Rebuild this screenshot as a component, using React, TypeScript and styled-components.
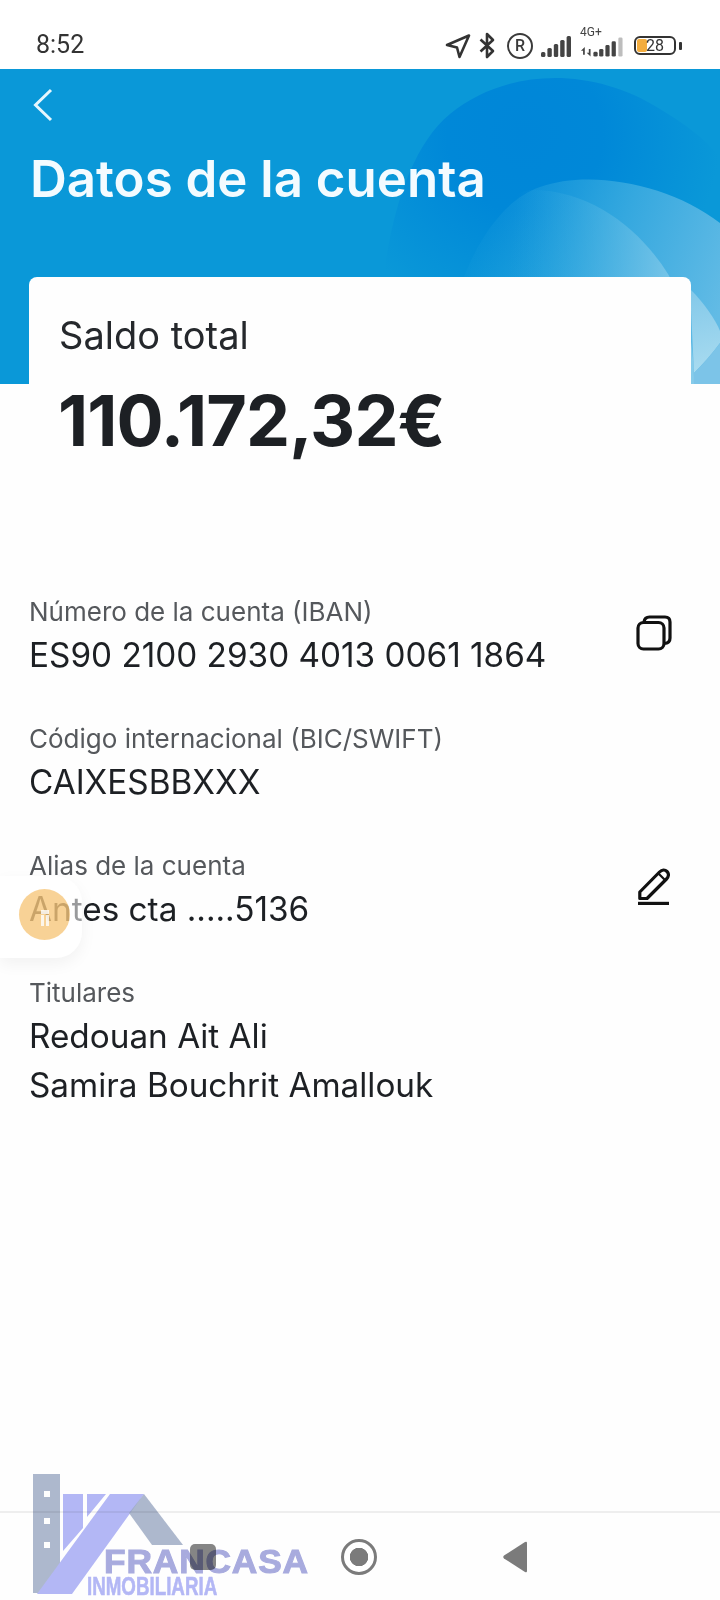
import React from "react";
import styled, { createGlobalStyle } from "styled-components";

const GlobalStyle = createGlobalStyle`
  html, body {
    margin: 0;
    padding: 0;
    background: #fefefe;
  }
  * {
    box-sizing: border-box;
  }
`;

const accounts = [
  { label: "Número de la cuenta (IBAN)", values: ["ES90 2100 2930 4013 0061 1864"], action: "copy" },
  { label: "Código internacional (BIC/SWIFT)", values: ["CAIXESBBXXX"] },
  { label: "Alias de la cuenta", values: ["Antes cta .....5136"], action: "edit" },
  { label: "Titulares", values: ["Redouan Ait Ali", "Samira Bouchrit Amallouk"] },
];

function SignalBars({ bars }: { bars: number[] }) {
  return (
    <svg width={bars.length * 6.4} height="22" viewBox={`0 0 ${bars.length * 6.4} 22`}>
      {bars.map((h, i) => (
        <rect key={i} x={i * 6.4} y={22 - h} width="4.4" height={h} rx="1.5" fill="#444" />
      ))}
    </svg>
  );
}

function HeaderShapes() {
  return (
    <HeaderArt viewBox="0 0 720 315" preserveAspectRatio="none">
      <defs>
        <radialGradient id="arcA" gradientUnits="userSpaceOnUse" cx="525" cy="65" r="195">
          <stop offset="0" stopColor="#0086d8" />
          <stop offset="0.4" stopColor="#0088d8" />
          <stop offset="1" stopColor="#0a98d8" />
        </radialGradient>
        <linearGradient id="arcB" gradientUnits="userSpaceOnUse" x1="470" y1="150" x2="720" y2="240">
          <stop offset="0" stopColor="#2aa6de" stopOpacity="0" />
          <stop offset="0.55" stopColor="#35a8df" />
          <stop offset="1" stopColor="#62bbe5" />
        </linearGradient>
        <linearGradient id="arcC" gradientUnits="userSpaceOnUse" x1="510" y1="200" x2="690" y2="215">
          <stop offset="0" stopColor="#2aa6de" stopOpacity="0" />
          <stop offset="1" stopColor="#86cbea" />
        </linearGradient>
        <linearGradient id="arcD" gradientUnits="userSpaceOnUse" x1="695" y1="210" x2="715" y2="300">
          <stop offset="0" stopColor="#7ec6e8" />
          <stop offset="1" stopColor="#a8dbf0" />
        </linearGradient>
      </defs>
      <path d="M380 315 C 375 210 395 90 450 45 C 505 0 590 -4 660 40 C 685 55 705 70 720 88 L720 315 Z" fill="url(#arcA)" />
      <path d="M440 315 C 450 210 490 135 540 118 C 590 100 670 115 720 154 L720 315 Z" fill="url(#arcB)" />
      <path d="M450 315 C 450 220 490 125 530 121 C 590 120 640 160 668 205 C 685 235 694 270 694 315 Z" fill="url(#arcC)" />
      <path d="M690 220 C 705 235 715 250 720 262 L720 274 C 712 285 703 295 694 304 Z" fill="url(#arcD)" />
      <path d="M694 304 C 703 295 712 285 720 274 L720 315 L694 315 Z" fill="#7cc4e8" />
    </HeaderArt>
  );
}

function CopyIcon() {
  return (
    <svg width="36" height="36" viewBox="0 0 36 36" fill="none" stroke="#111" strokeWidth="3.2">
      <rect x="2" y="7.5" width="26" height="26.5" rx="5.5" />
      <path d="M8 7 C 8.5 3.5 10 2 13.5 2 H29 C 32.5 2 34 3.5 34 7 V23 C 34 26.5 32.5 28 29 28.5" />
    </svg>
  );
}

function PencilIcon() {
  return (
    <svg width="32" height="37" viewBox="0 0 32 37" fill="none" stroke="#111" strokeWidth="3.2" strokeLinejoin="round">
      <path d="M1.8 24 L21.5 4 C 24 1.5 27 1.5 29 3.5 C 31 5.5 31 8.5 28.5 11 L9 30.5 H1.8 Z" />
      <path d="M20.5 5.5 L27 12" strokeWidth="2.2" />
      <path d="M0 35.5 H31" strokeWidth="3.4" />
    </svg>
  );
}

export default function App() {
  return (
    <Screen>
      <GlobalStyle />
      <StatusBar>
        <Clock>8:52</Clock>
        <StatusIcons>
          <svg width="26" height="26" viewBox="0 0 26 26" fill="none" stroke="#333" strokeWidth="2.6" strokeLinejoin="round">
            <path d="M2 12 L24 2.5 L14.5 24 L12 14.5 Z" />
          </svg>
          <svg width="16" height="27" viewBox="0 0 16 27" fill="none" stroke="#333" strokeWidth="2.6" strokeLinejoin="round">
            <path d="M1.5 7.5 L14 19 L8 25 V2 L14 8 L1.5 19.5" />
          </svg>
          <RegisteredMark>R</RegisteredMark>
          <SignalBars bars={[5, 9, 13, 17, 21]} />
          <NetworkGroup>
            <NetworkLabel>4G+</NetworkLabel>
            <svg width="48" height="22" viewBox="0 0 48 22">
              <path d="M1 15 L5 11 V19 H3.2 V15 Z M7 17 L11 21 V13 H9.2 V17 Z" fill="#444" />
              <rect x="14" y="16" width="4.4" height="5" rx="1.5" fill="#444" />
              <rect x="20" y="13" width="4.4" height="8" rx="1.5" fill="#444" />
              <rect x="26.5" y="9" width="4.4" height="12" rx="1.5" fill="#444" />
              <rect x="33" y="5" width="4.4" height="16" rx="1.5" fill="#444" />
              <rect x="40" y="1" width="4.4" height="20" rx="1.5" fill="#bdbdbd" />
            </svg>
          </NetworkGroup>
          <Battery>
            <BatteryLevel style={{ width: `${28 * 0.36}px` }} />
            <BatteryText>28</BatteryText>
          </Battery>
          <BatteryTip />
        </StatusIcons>
      </StatusBar>

      <Header>
        <HeaderShapes />
        <BackButton>
          <svg width="22" height="34" viewBox="0 0 22 34" fill="none" stroke="#e6f6fd" strokeWidth="3">
            <path d="M19 2 L3.5 17 L19 32" />
          </svg>
        </BackButton>
        <Title>Datos de la cuenta</Title>
      </Header>

      <BalanceCard>
        <BalanceLabel>Saldo total</BalanceLabel>
        <BalanceAmount>110.172,32€</BalanceAmount>
      </BalanceCard>

      <DetailList>
        {accounts.map((row) => (
          <DetailRow key={row.label}>
            <div>
              <DetailLabel>{row.label}</DetailLabel>
              {row.values.map((value) => (
                <DetailValue key={value}>{value}</DetailValue>
              ))}
            </div>
            {row.action === "copy" && (
              <ActionSlot $lift={4}>
                <CopyIcon />
              </ActionSlot>
            )}
            {row.action === "edit" && (
              <ActionSlot $lift={6}>
                <PencilIcon />
              </ActionSlot>
            )}
          </DetailRow>
        ))}
      </DetailList>

      <NavBar>
        <NavSquare />
        <NavCircle />
        <svg width="26" height="32" viewBox="0 0 26 32">
          <path d="M25 2 V30 Q 25 32 23 31 L2 17.5 Q 0.5 16 2 14.5 L23 1 Q 25 0 25 2 Z" fill="#7b7b7b" />
        </svg>
      </NavBar>

      <FloatingBubble>
        <BubbleDot>
          <svg width="10" height="16" viewBox="0 0 10 16" fill="#fff" opacity="0.8">
            <rect x="1" y="0" width="8" height="4" />
            <rect x="1" y="5" width="3" height="11" />
            <rect x="6" y="5" width="3" height="11" />
          </svg>
        </BubbleDot>
      </FloatingBubble>

      <Watermark>
        <svg width="190" height="122" viewBox="0 0 190 122">
          <rect x="0" y="0" width="27" height="119" fill="#9aa8c2" opacity="0.8" />
          <rect x="11" y="17" width="6" height="6" fill="#fff" />
          <rect x="11" y="44" width="6" height="6" fill="#fff" />
          <rect x="11" y="68" width="6" height="6" fill="#fff" />
          <path d="M30 20 H50 V54 L30 77 Z" fill="#b4b8f6" />
          <path d="M54 20 H73 L54 43 Z" fill="#b4b8f6" />
          <path d="M77 20 H111 L39 120 H4 Z" fill="#b4b8f6" />
          <path d="M111 20 L150 71 H119 L96 39 Z" fill="#9aa8c2" opacity="0.8" />
        </svg>
        <WatermarkName>FRANCASA</WatermarkName>
        <WatermarkSub>INMOBILIARIA</WatermarkSub>
      </Watermark>
    </Screen>
  );
}

const Screen = styled.div`
  position: relative;
  width: 720px;
  height: 1600px;
  overflow: hidden;
  display: flex;
  flex-direction: column;
  background: #fefefe;
  font-family: Inter, "Liberation Sans", sans-serif;
  color: #1d2024;
`;

const StatusBar = styled.div`
  height: 69px;
  flex: none;
  display: flex;
  align-items: flex-end;
  justify-content: space-between;
  padding: 0 38px 10px 36px;
  background: #fff;
`;

const Clock = styled.span`
  font-family: Roboto, "Liberation Sans", sans-serif;
  font-size: 25px;
  font-weight: 400;
  line-height: 28px;
  color: #333;
`;

const StatusIcons = styled.div`
  display: flex;
  align-items: center;
  gap: 8px;
`;

const RegisteredMark = styled.span`
  width: 26px;
  height: 26px;
  margin-left: 4px;
  border: 2.6px solid #3a3a3a;
  border-radius: 50%;
  display: flex;
  align-items: center;
  justify-content: center;
  font-family: Roboto, sans-serif;
  font-size: 16px;
  font-weight: 500;
  color: #3a3a3a;
`;

const NetworkGroup = styled.div`
  position: relative;
  width: 46px;
  margin-left: -1px;
  height: 24px;
  display: flex;
  align-items: flex-end;
`;

const NetworkLabel = styled.span`
  position: absolute;
  top: -8px;
  left: 0;
  font-family: Roboto, sans-serif;
  font-size: 12px;
  line-height: 13px;
  color: #444;
`;

const Battery = styled.div`
  position: relative;
  width: 42px;
  height: 19px;
  border: 2px solid #333;
  border-radius: 6px;
  overflow: hidden;
  display: flex;
  align-items: center;
  justify-content: center;
`;

const BatteryLevel = styled.div`
  position: absolute;
  left: 1px;
  top: 1px;
  bottom: 1px;
  background: #f3ad3f;
  border-radius: 2px;
`;

const BatteryText = styled.span`
  position: relative;
  font-family: Roboto, sans-serif;
  font-size: 16px;
  line-height: 15px;
  color: #333;
`;

const BatteryTip = styled.div`
  width: 3px;
  height: 8px;
  margin-left: -5px;
  background: #333;
  border-radius: 1px;
`;

const Header = styled.header`
  position: relative;
  flex: none;
  height: 315px;
  padding: 19px 30px 0;
  overflow: hidden;
  background: #0a98d8;
`;

const HeaderArt = styled.svg`
  position: absolute;
  inset: 0;
  width: 100%;
  height: 100%;
`;

const BackButton = styled.div`
  position: relative;
  height: 34px;
  padding-left: 2px;
`;

const Title = styled.h1`
  position: relative;
  margin: 24px 0 0;
  font-size: 51px;
  font-weight: 600;
  line-height: 66px;
  color: #f3fbff;
`;

const BalanceCard = styled.section`
  position: relative;
  flex: none;
  width: 662px;
  height: 200px;
  margin: -107px 0 0 29px;
  padding: 35px 30px 0;
  background: #fefefe;
  border-radius: 8px 8px 0 0;
`;

const BalanceLabel = styled.div`
  font-size: 38px;
  line-height: 46px;
  color: #25282c;
`;

const BalanceAmount = styled.div`
  margin-top: 22px;
  margin-left: -1px;
  font-size: 70px;
  font-weight: 700;
  line-height: 82px;
  letter-spacing: -0.9px;
  color: #1d2024;
`;

const DetailList = styled.div`
  flex: 1;
  display: flex;
  flex-direction: column;
  gap: 45px;
  padding: 117px 29px 0;
`;

const DetailRow = styled.div`
  display: flex;
  align-items: center;
  justify-content: space-between;
`;

const DetailLabel = styled.div`
  font-size: 26px;
  line-height: 36px;
  color: #55585c;
`;

const DetailValue = styled.div`
  font-size: 33.3px;
  line-height: 46px;
  margin-top: 2px;
  margin-bottom: -2px;
  color: #1d2024;

  & + & {
    margin-top: 5px;
  }
`;

const ActionSlot = styled.div<{ $lift: number }>`
  width: 36px;
  margin-right: 19px;
  margin-bottom: ${(p) => p.$lift}px;
  display: flex;
  justify-content: center;
`;

const NavBar = styled.nav`
  flex: none;
  height: 89px;
  border-top: 2px solid #eeeeee;
  display: flex;
  align-items: center;
  justify-content: space-between;
  padding: 0 192px 0 190px;
  background: #fefefe;
`;

const NavSquare = styled.div`
  width: 26px;
  height: 26px;
  border-radius: 5px;
  background: #858585;
`;

const NavCircle = styled.div`
  width: 36px;
  height: 36px;
  border-radius: 50%;
  border: 3px solid #7b7b7b;
  background: radial-gradient(circle, #7b7b7b 0 9px, #fff 9.5px);
`;

const FloatingBubble = styled.div`
  position: absolute;
  left: 0;
  top: 876px;
  width: 82px;
  height: 82px;
  padding: 0 0 6px 19px;
  border-radius: 0 26px 26px 0;
  background: rgba(255, 255, 255, 0.55);
  box-shadow: 0 6px 16px rgba(0, 0, 0, 0.05);
  display: flex;
  align-items: center;
`;

const BubbleDot = styled.div`
  width: 51px;
  height: 51px;
  border-radius: 50%;
  background: rgba(243, 173, 63, 0.55);
  display: flex;
  align-items: center;
  justify-content: center;
  padding-top: 8px;
`;

const Watermark = styled.div`
  position: absolute;
  left: 33px;
  top: 1474px;
  width: 290px;
  height: 126px;
  mix-blend-mode: multiply;
`;

const WatermarkName = styled.div`
  position: absolute;
  left: 71px;
  top: 75px;
  font-family: "Liberation Sans", sans-serif;
  font-size: 33px;
  font-weight: 700;
  line-height: 25px;
  letter-spacing: 0.8px;
  color: #a9acdf;
  -webkit-text-stroke: 1px #a9acdf;
  transform: scaleX(1.07);
  transform-origin: left center;
  white-space: nowrap;
`;

const WatermarkSub = styled.div`
  position: absolute;
  left: 54px;
  top: 103px;
  font-family: "Liberation Sans", sans-serif;
  font-size: 25px;
  font-weight: 700;
  line-height: 19px;
  color: #b4b8f6;
  -webkit-text-stroke: 0.6px #b4b8f6;
  transform: scaleX(0.75);
  transform-origin: left center;
  white-space: nowrap;
`;
